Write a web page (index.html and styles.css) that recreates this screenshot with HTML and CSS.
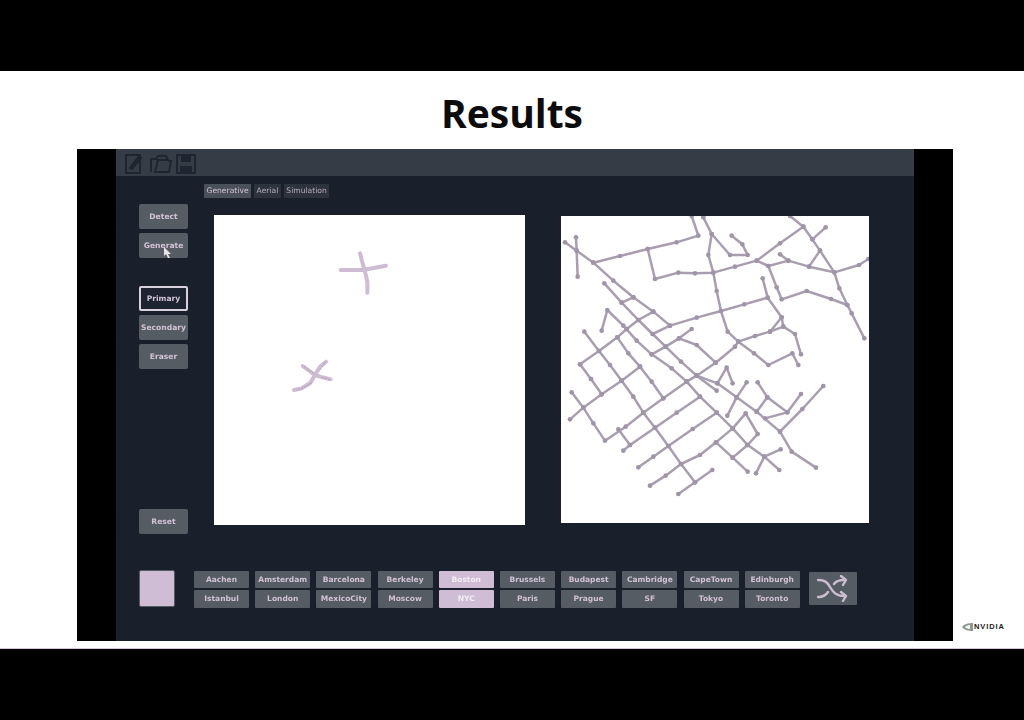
FILE: index.html
```html
<!DOCTYPE html>
<html lang="en">
<head>
<meta charset="utf-8">
<title>Results</title>
<link rel="stylesheet" href="styles.css">
</head>
<body>
<div class="bar"></div>
<main class="slide">
  <h1 class="title">Results</h1>
  <div class="video">
    <div class="app">
      <header class="toolbar">
        <svg class="tool-icons" width="72" height="22" viewBox="0 0 72 22" fill="none" stroke="#1f2530" stroke-width="2">
          <path d="M1 2h14v18H1z"/><path d="M5 15l9-12 2 2-9 11z" fill="#1f2530"/>
          <path d="M26 19V6h5l2-3h8l2 4H33l-3 12h14l2-11h-3"/>
          <path d="M52 2h18v18H52z"/><path d="M56 2h10v7H56zM55 13h12v7H55z" fill="#1f2530" stroke="none"/>
        </svg>
      </header>
      <div class="workspace">
        <aside class="side">
          <div class="side-group">
            <button class="btn">Detect</button>
            <button class="btn">Generate</button>
          </div>
          <div class="side-group side-tools">
            <button class="btn btn-active">Primary</button>
            <button class="btn">Secondary</button>
            <button class="btn">Eraser</button>
          </div>
          <button class="btn btn-reset">Reset</button>
        </aside>
        <section class="content">
          <nav class="tabs">
            <span class="tab tab-on">Generative</span>
            <span class="tab">Aerial</span>
            <span class="tab">Simulation</span>
          </nav>
          <div class="canvases">
            <svg class="canvas canvas-left" viewBox="-198 -75 933 930">
              <g class="sketch">
                <polyline points="182,90 250,90 285,83 318,77"/>
                <polyline points="240,40 245,60 255,95 262,125 262,158"/>
                <polyline points="68,378 105,405 120,410 152,418"/>
                <polyline points="138,365 120,380 105,405 90,430 65,445 42,450"/>
              </g>
              <g class="sketch-core">
                <polyline points="72,380 100,400"/>
                <polyline points="135,368 118,392"/>
                <polyline points="125,412 150,420"/>
                <polyline points="95,428 70,444 48,450"/>
              </g>
            </svg>
            <svg class="canvas canvas-right" viewBox="18 18 924 921">
              <defs>
                <marker id="node" markerUnits="userSpaceOnUse" markerWidth="16" markerHeight="16" viewBox="0 0 16 16" refX="8" refY="8">
                  <circle cx="8" cy="8" r="7" fill="#a095a8"/>
                </marker>
              </defs>
              <g class="roads">
                <polyline points="30,97 65,122 115,158 175,212 235,262 295,305 345,347"/>
                <polyline points="63,82 65,122 68,200"/>
                <polyline points="115,158 195,138 278,117 365,97 430,77 410,18"/>
                <polyline points="278,117 300,207 370,188 420,190 475,188 540,170 605,152 675,100 745,50 705,18"/>
                <polyline points="445,22 470,72 460,135 475,188 485,243 498,303 518,365 550,395 597,430 640,465 712,430 730,465"/>
                <polyline points="470,72 525,135 578,135 562,103 530,77"/>
                <polyline points="745,50 772,88 795,122 838,187 853,235 877,285 890,310 928,385"/>
                <polyline points="812,52 772,88"/>
                <polyline points="795,122 762,170 700,152 640,168 605,152"/>
                <polyline points="675,133 700,152"/>
                <polyline points="762,170 838,187 912,165 940,147"/>
                <polyline points="640,168 665,232 680,268 755,243 828,267 877,285"/>
                <polyline points="623,205 638,263 568,283 498,303 425,323 345,347 293,372"/>
                <polyline points="638,263 680,322 685,350 720,372 738,433"/>
                <polyline points="680,322 645,365 685,350"/>
                <polyline points="645,365 600,378 550,395 540,410 482,458 425,497"/>
                <polyline points="148,220 200,278 250,330 293,372 332,410 378,455 425,497 485,542"/>
                <polyline points="200,278 235,262"/>
                <polyline points="295,305 250,330 215,357"/>
                <polyline points="140,362 157,300 205,347 245,392 290,433 350,475 395,515"/>
                <polyline points="88,365 132,423 165,465 200,512"/>
                <polyline points="75,463 132,423 187,382 215,357"/>
                <polyline points="187,382 220,430 255,470"/>
                <polyline points="75,463 108,507"/>
                <polyline points="290,433 332,410 372,385 410,357"/>
                <polyline points="372,385 425,405 482,458"/>
                <g transform="translate(0 465)">
                  <polyline points="45,163 85,128 140,88 200,47 255,5"/>
                  <polyline points="50,82 85,128 115,175 150,227 212,185 265,143 325,100 395,50 425,32"/>
                  <polyline points="108,42 140,88"/>
                  <polyline points="200,47 235,95 265,143 300,188 340,243 378,297 420,352"/>
                  <polyline points="255,5 290,50 325,100"/>
                  <polyline points="190,193 225,240"/>
                  <polyline points="205,257 225,240 300,188 365,143 435,95"/>
                  <polyline points="395,50 435,95 485,143 533,190 578,240 628,275 673,315"/>
                  <polyline points="250,307 295,275 340,243 413,192 485,143"/>
                  <polyline points="285,362 332,332 378,297 435,270 483,232 533,190 572,145 608,207 578,240 533,278 483,232"/>
                  <polyline points="533,278 578,320"/>
                  <polyline points="370,387 420,352 472,315"/>
                  <polyline points="425,32 487,55 515,8 533,55"/>
                  <polyline points="487,55 545,97 605,140 675,200 710,260 783,308"/>
                  <polyline points="545,97 575,52"/>
                  <polyline points="545,97 517,152"/>
                  <polyline points="608,52 637,97 697,142 738,87"/>
                  <polyline points="637,97 605,140"/>
                  <polyline points="630,160 697,142"/>
                  <polyline points="675,200 742,132 805,63"/>
                  <polyline points="603,325 628,275 677,253"/>
                </g>
              </g>
            </svg>
          </div>
        </section>
      </div>
      <footer class="palette">
        <div class="swatch"></div>
        <div class="cities">
          <button class="city">Aachen</button>
          <button class="city">Amsterdam</button>
          <button class="city">Barcelona</button>
          <button class="city">Berkeley</button>
          <button class="city city-on">Boston</button>
          <button class="city">Brussels</button>
          <button class="city">Budapest</button>
          <button class="city">Cambridge</button>
          <button class="city">CapeTown</button>
          <button class="city">Edinburgh</button>
          <button class="city">Istanbul</button>
          <button class="city">London</button>
          <button class="city">MexicoCity</button>
          <button class="city">Moscow</button>
          <button class="city city-on">NYC</button>
          <button class="city">Paris</button>
          <button class="city">Prague</button>
          <button class="city">SF</button>
          <button class="city">Tokyo</button>
          <button class="city">Toronto</button>
        </div>
        <button class="shuffle" aria-label="Shuffle">
          <svg width="32" height="27" viewBox="0 0 32 27" fill="none" stroke="#cdbdd2" stroke-width="2.4" stroke-linecap="round" stroke-linejoin="round">
            <path d="M1 5c7 0 9 2 12 7s6 9 14 9"/>
            <path d="M1 22c5 0 8-2 10-5M17 9c2-3 5-4 10-4"/>
            <path d="M24 1l5 4-3 5M24 17l5 4-3 5"/>
          </svg>
        </button>
      </footer>
      <svg class="cursor" width="8" height="11" viewBox="0 0 8 11"><path d="M0 0l7 7H4l2 4-2 0-2-4-2 2z" fill="#e8e4ea"/></svg>
    </div>
  </div>
  <div class="brand">
    <svg width="11" height="8" viewBox="0 0 11 8"><path d="M0 4c2-3 6-4 11-4v8C6 8 2 7 0 4z" fill="#8f9a8f"/><path d="M3 4c1-1 3-2 5-2v4C6 6 4 5 3 4z" fill="#fff"/></svg>
    <span class="brand-name">NVIDIA</span>
  </div>
</main>
<div class="bar"></div>
</body>
</html>
```
FILE: styles.css
```css
* { box-sizing: border-box; }
html, body { margin: 0; padding: 0; }
body { width: 1024px; height: 720px; overflow: hidden; background: #000; font-family: "DejaVu Sans", sans-serif; }
.bar { height: 71px; background: #000; }
.slide { position: relative; height: 578px; background: #fff; padding: 0 71px 8px 77px; border-bottom: 1px solid #d6c8da; }
.title { margin: 0; height: 78px; padding-top: 17px; text-align: center; width: 870px; font: 700 39px/50px "Open Sans", sans-serif; color: #0c0c0c; }
.video { width: 876px; height: 492px; background: #000; padding: 0 39px; }
.app { position: relative; width: 798px; height: 492px; background: #1a202b; display: flex; flex-direction: column; filter: blur(.45px); }
.toolbar { height: 27px; flex: none; background: #363c45; padding: 4px 0 0 9px; display: flex; align-items: flex-start; }
.tool-icons { display: block; }
.workspace { flex: 1; display: flex; min-height: 0; }
.side { width: 98px; padding: 28px 0 0 23px; display: flex; flex-direction: column; height: 358px; }
.side-group { display: flex; flex-direction: column; gap: 4px; }
.side-tools { margin-top: 28px; }
.btn { width: 49px; height: 25px; padding: 0; border: 0; border-radius: 2px; background: #565c64; color: #d2c2d6; font: 700 7.6px/1 "DejaVu Sans", sans-serif; }
.btn-active { background: #1d2330; border: 2px solid #d8d0dc; }
.btn-reset { margin-top: auto; }
.content { flex: 1; padding-top: 8px; }
.tabs { display: flex; gap: 3px; height: 14px; margin-bottom: 17px; margin-left: -10px; }
.tab { padding: 0 2.5px; background: #2d333d; color: #b7adbd; font: 400 7.6px/14px "DejaVu Sans", sans-serif; white-space: nowrap; }
.tab-on { background: #4a505a; color: #d2c2d6; }
.canvases { display: flex; align-items: flex-start; gap: 36px; }
.canvas { display: block; background: #fff; flex: none; }
.canvas-left { width: 311px; height: 310px; }
.canvas-right { width: 308px; height: 307px; margin-top: 1px; }
.sketch polyline { fill: none; stroke: #cdbcd3; stroke-width: 12; stroke-linecap: round; stroke-linejoin: round; }
.sketch-core polyline { fill: none; stroke: #a89bb0; stroke-width: 2.5; stroke-dasharray: 6 4; }
.roads polyline { fill: none; stroke: #a99eb0; stroke-width: 7.5; stroke-linejoin: round; marker-start: url(#node); marker-mid: url(#node); marker-end: url(#node); }
.palette { height: 71px; flex: none; padding: 0 0 0 23px; display: flex; align-items: flex-start; }
.swatch { width: 36px; height: 37px; background: #cfbcd5; border-radius: 2px; border: 1px solid #565c64; }
.cities { margin: 1px 0 0 19px; display: grid; grid-template-columns: repeat(10, 55px); grid-template-rows: 17px 18px; column-gap: 6.2px; row-gap: 2px; }
.city { padding: 0; border: 0; border-radius: 1px; background: #565c64; color: #d2c2d6; font: 700 7.5px/1 "DejaVu Sans", sans-serif; white-space: nowrap; overflow: hidden; }
.city-on { background: #cfbcd5; color: #f4eff6; }
.shuffle { width: 48px; height: 33px; margin: 2px 0 0 9px; padding: 0; border: 0; border-radius: 1px; background: #565c64; display: flex; align-items: center; justify-content: center; }
.cursor { position: absolute; left: 48px; top: 98px; }
.brand { position: absolute; left: 962px; top: 551px; display: flex; align-items: center; gap: 1px; }
.brand-name { font: 700 7.5px/10px "Liberation Sans", sans-serif; color: #222; letter-spacing: .9px; }
```
